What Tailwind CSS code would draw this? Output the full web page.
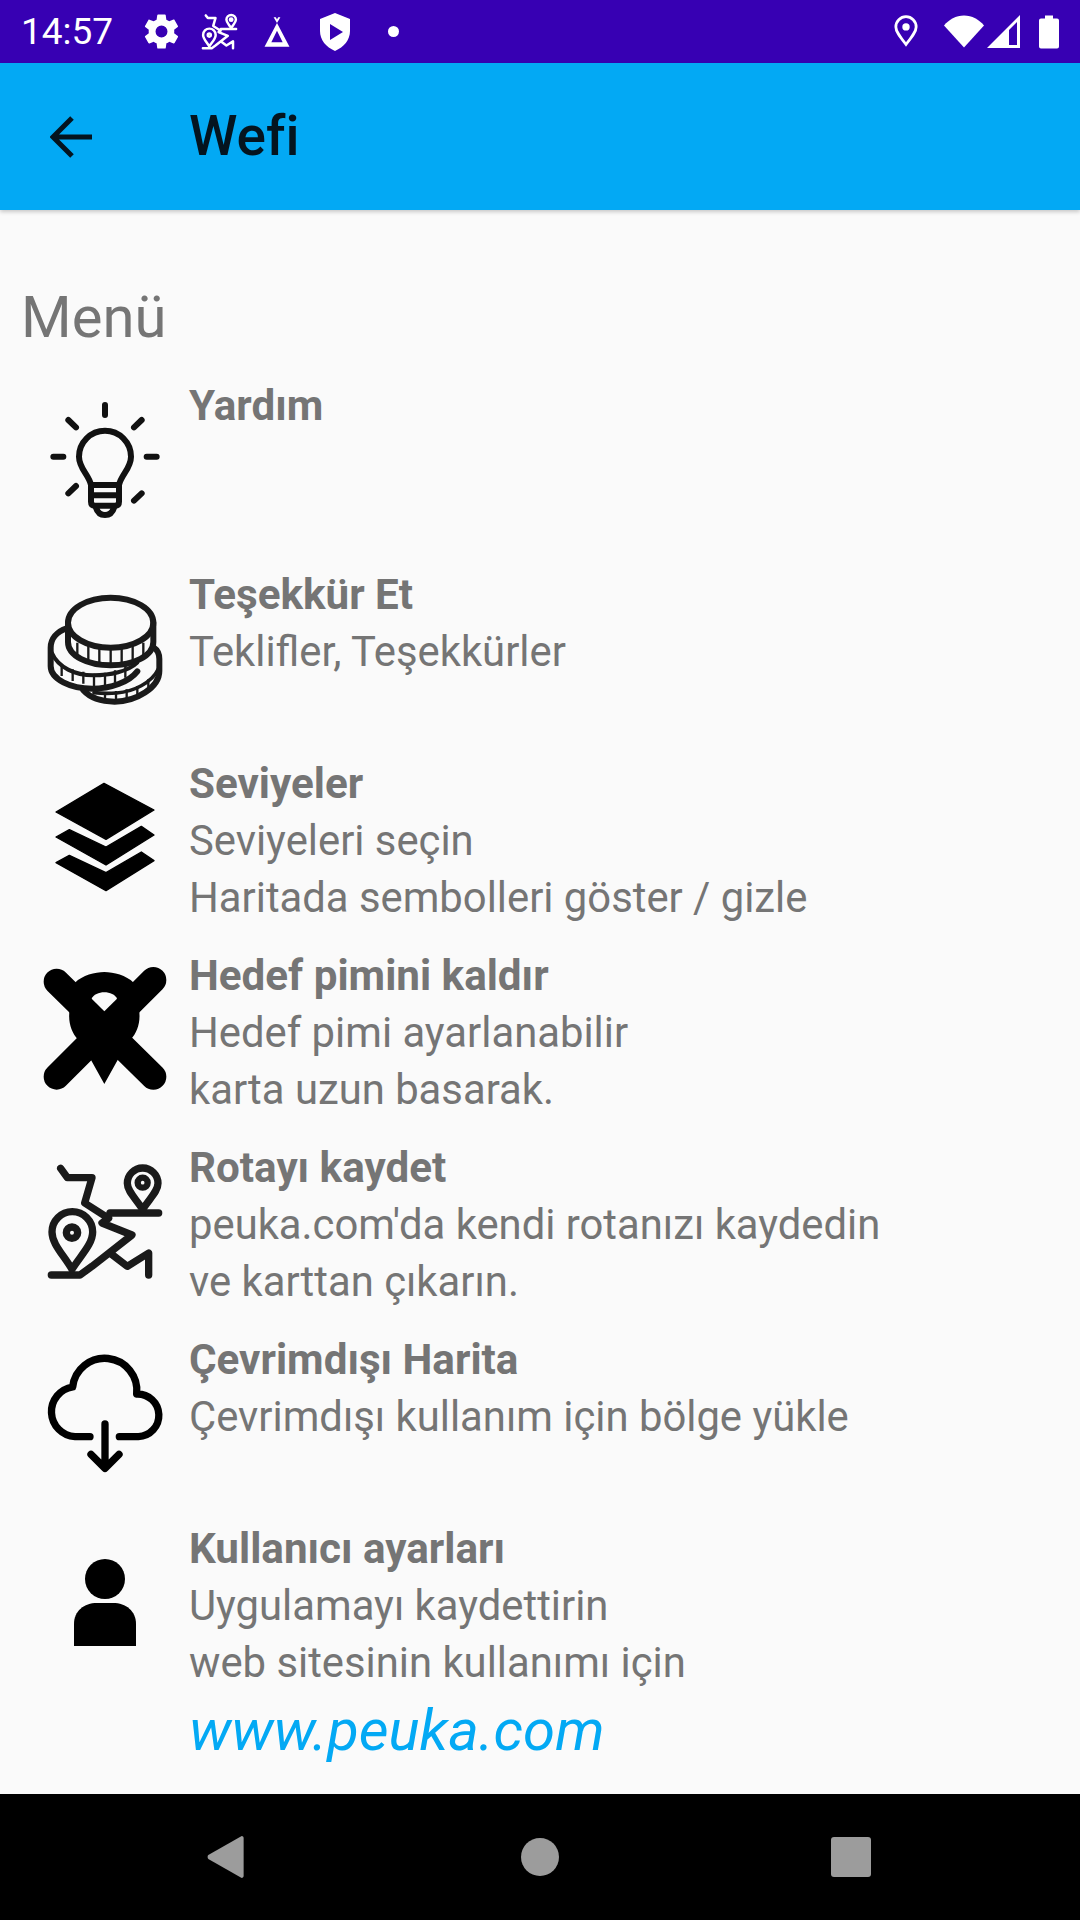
<!DOCTYPE html>
<html lang="en">
<head>
  <meta charset="UTF-8">
  <meta name="viewport" content="width=device-width, initial-scale=1.0">
  <title>Wefi</title>
  <script src="https://cdn.jsdelivr.net/npm/@tailwindcss/browser@4"></script>
</head>
<body class="bg-[#fafafa] font-['Roboto',sans-serif] w-[1080px] h-[1920px] overflow-hidden flex flex-col">
  <!-- Status bar -->
  <div class="h-[63px] bg-[#3700b3] text-white flex items-center shrink-0">
    <span class="ml-[21px] text-[37px] leading-none w-[98px]">14:57</span>
    <svg class="w-[41px] h-[41px] ml-[22px]" viewBox="0 0 24 24" fill="#fff"><path d="M19.4 13c.04-.32.07-.66.07-1s-.03-.68-.07-1l2.1-1.65c.2-.15.25-.42.13-.64l-2-3.46c-.12-.22-.39-.3-.61-.22l-2.49 1c-.52-.4-1.08-.73-1.69-.98l-.38-2.65A.49.49 0 0 0 14 2h-4c-.25 0-.46.18-.49.42l-.38 2.65c-.61.25-1.17.59-1.69.98l-2.49-1c-.23-.09-.49 0-.61.22l-2 3.46c-.13.22-.07.49.12.64L4.57 11c-.04.32-.07.66-.07 1s.03.68.07 1l-2.11 1.65c-.19.15-.24.42-.12.64l2 3.46c.12.22.39.3.61.22l2.49-1c.52.4 1.08.73 1.69.98l.38 2.65c.03.24.24.42.49.42h4c.25 0 .46-.18.49-.42l.38-2.65c.61-.25 1.17-.59 1.69-.98l2.49 1c.23.09.49 0 .61-.22l2-3.46c.12-.22.07-.49-.12-.64L19.4 13zM12 15.5a3.5 3.5 0 1 1 0-7 3.5 3.5 0 0 1 0 7z"/></svg>
    <svg class="w-[39px] h-[39px] ml-[18px]" viewBox="66 51 378 378" fill="none" stroke="#fff" stroke-width="24" stroke-linecap="round" stroke-linejoin="round"><path d="M122 84l20 26h74l-22 76 72 46-20 14 90 36-120 94-36 26H94M268 216h148M270 336l52 40 64-40v66"/><path d="M156 385c-26-44-60-76-60-112a61 61 0 0 1 122 0c0 36-34 68-62 112zM368 205c-22-34-46-54-46-78a46 46 0 0 1 92 0c0 24-24 44-46 78z"/><circle cx="156" cy="275" r="15"/><circle cx="368" cy="125" r="12"/></svg>
    <svg class="w-[34px] h-[34px] ml-[21px]" viewBox="0 0 30 30" fill="#fff"><path d="M15 7l-3-5h2l1 2 1-2h2l-3 5 11 21H4zM15 14l-5 10h10z" fill-rule="evenodd"/></svg>
    <svg class="w-[32px] h-[38px] ml-[25px]" viewBox="0 0 32 38" fill="#fff"><path d="M16 0l15 6v12c0 9-6 16-15 20C7 34 1 27 1 18V6zM11 11v16l13-8z" fill-rule="evenodd"/></svg>
    <span class="w-[11px] h-[11px] rounded-full bg-white ml-[37px]"></span>
    <div class="ml-auto flex items-center">
      <svg class="w-[24px] h-[33px]" viewBox="0 0 26 34" fill="none" stroke="#fff" stroke-width="3"><path d="M13 31C6 22 2 17 2 12a11 11 0 0 1 22 0c0 5-4 10-11 19z"/><circle cx="13" cy="12" r="4" fill="#fff" stroke="none"/></svg>
      <svg class="w-[40px] h-[33px] ml-[26px]" viewBox="0 0 40 32" fill="#fff"><path d="M0 10C5 4 12 0 20 0s15 4 20 10L20 32z"/></svg>
      <svg class="w-[33px] h-[33px] ml-[3px]" viewBox="0 0 33 33" fill="#fff"><path d="M33 0v33H0zM30 7l-8 8v15h8z" fill-rule="evenodd"/></svg>
      <svg class="w-[20px] h-[34px] ml-[19px] mr-[21px]" viewBox="0 0 20 33" fill="#fff"><path d="M6 0h8v3h4a2 2 0 0 1 2 2v26a2 2 0 0 1-2 2H2a2 2 0 0 1-2-2V5a2 2 0 0 1 2-2h4z"/></svg>
    </div>
  </div>

  <!-- App bar -->
  <div class="h-[147px] bg-[#03a9f4] flex items-center shrink-0 shadow-[0_2px_4px_rgba(0,0,0,0.2)] relative text-[#04141f]">
    <svg class="w-[42px] h-[42px] ml-[50px]" viewBox="0 0 42 42" fill="none" stroke="currentColor" stroke-width="5"><path d="M42 21H3M22 2L3 21l19 19"/></svg>
    <span class="ml-[97px] text-[55px] font-medium leading-none [font-variant-ligatures:none]">Wefi</span>
  </div>

  <!-- Menu -->
  <main class="flex-1 text-[#757575] text-[41.8px] leading-[57.5px]">
    <h1 class="text-[58px] leading-none font-normal ml-[21px] mt-[78px] mb-[31px]">Menü</h1>

    <div class="flex h-[189px]">
      <div class="w-[189px] shrink-0 pl-[42px] pt-[19px]">
        <svg class="w-[126px] h-[126px]" viewBox="66 45 378 378" fill="none" stroke="#111" stroke-width="18" stroke-linecap="round" stroke-linejoin="round"><path d="M255 72v30M100 227h30M380 227h30M145 117l23 22M365 117l-23 22M145 337l23-22M365 337l-23 22"/><path d="M213 312c-6-30-36-50-36-85a78 78 0 0 1 156 0c0 35-30 55-36 85zM213 312v50c0 8 4 12 12 12h60c8 0 12-4 12-12v-50zM213 343h84M226 374c4 18 14 28 29 28s25-10 29-28z"/></svg>
      </div>
      <div><p class="font-bold text-[42.2px] -mb-px">Yardım</p></div>
    </div>

    <div class="flex h-[189px]">
      <div class="w-[189px] shrink-0 pl-[42px] pt-[19px]">
        <svg class="w-[126px] h-[126px]" viewBox="66 612 378 378" fill="none" stroke="#1a1a1a" stroke-width="18" stroke-linejoin="round" stroke-linecap="round"><ellipse cx="272" cy="725" rx="128" ry="75"/><path d="M144 725v58c0 42 60 70 128 70s128-28 128-70v-58"/><path d="M140 742c-30 10-48 32-48 58v55c0 40 60 68 125 68 55 0 110-20 135-52"/><path d="M95 815c20 45 70 68 125 68 50 0 105-12 132-38" stroke-width="12"/><path d="M402 800c12 8 16 20 16 34v36c0 50-70 92-134 92-38 0-74-12-94-34"/><path d="M222 935c25 3 45 3 68 1 50-4 105-30 125-72" stroke-width="11"/><path d="M172 785v43M205 795v45M238 800v45M272 802v46M305 800v45M338 795v45M370 785v43M125 850v35M158 865v35M190 872v36M222 878v37M255 875v37M285 868v37M316 855v35M255 935v20M288 930v28M320 925v27M352 915v30M385 895v35" stroke-width="7" stroke-linecap="butt"/></svg>
      </div>
      <div><p class="font-bold text-[42.2px] -mb-px">Teşekkür Et</p><p>Teklifler, Teşekkürler</p></div>
    </div>

    <div class="flex h-[192px]">
      <div class="w-[189px] shrink-0 pl-[42px] pt-[19px]">
        <svg class="w-[126px] h-[126px]" viewBox="66 42 378 378" fill="#000"><path d="M252 70l150 80-144 88-150-82zM148 209l110 52 106-62 38 26-144 90-150-84zM148 286l110 52 106-62 38 26-144 90-150-84z" stroke="#000" stroke-width="4" stroke-linejoin="round"/></svg>
      </div>
      <div><p class="font-bold text-[42.2px] -mb-px">Seviyeler</p><p>Seviyeleri seçin</p><p>Haritada sembolleri göster / gizle</p></div>
    </div>

    <div class="flex h-[192px]">
      <div class="w-[189px] shrink-0 pl-[42px] pt-[19px]">
        <svg class="w-[126px] h-[126px]" viewBox="66 618 378 378" fill="#000"><path d="M165 668c22-22 60-32 88-32s66 10 88 32l16 80c6 40-6 70-24 90l-40 62-40 72-40-72-40-62c-18-20-30-50-24-90z"/><path d="M110 665l290 285M400 660L110 950" stroke="#000" stroke-width="78" stroke-linecap="round"/><path d="M215 716c10-26 66-26 76 0l-38 38z" fill="#fafafa"/></svg>
      </div>
      <div><p class="font-bold text-[42.2px] -mb-px">Hedef pimini kaldır</p><p>Hedef pimi ayarlanabilir</p><p>karta uzun basarak.</p></div>
    </div>

    <div class="flex h-[192px]">
      <div class="w-[189px] shrink-0 pl-[42px] pt-[19px]">
        <svg class="w-[126px] h-[126px]" viewBox="66 51 378 378" fill="none" stroke="#1a1a1a" stroke-width="22" stroke-linecap="round" stroke-linejoin="round"><path d="M122 82l20 28h74l-22 76 72 46-20 14 90 36-120 94-36 26H94M270 216h146M270 336l52 40 64-40v66"/><path d="M156 385c-26-44-60-76-60-112a61 61 0 0 1 122 0c0 36-34 68-62 112zM368 205c-22-34-46-54-46-78a46 46 0 0 1 92 0c0 24-24 44-46 78z"/><circle cx="156" cy="275" r="17"/><circle cx="368" cy="125" r="15" stroke-width="19"/></svg>
      </div>
      <div><p class="font-bold text-[42.2px] -mb-px">Rotayı kaydet</p><p>peuka.com'da kendi rotanızı kaydedin</p><p>ve karttan çıkarın.</p></div>
    </div>

    <div class="flex h-[189px]">
      <div class="w-[189px] shrink-0 pl-[42px] pt-[19px]">
        <svg class="w-[126px] h-[126px]" viewBox="66 630 378 378" fill="none" stroke="#000" stroke-width="22" stroke-linecap="round" stroke-linejoin="round"><path d="M210 890H165A75 75 0 0 1 158 741A96 96 0 0 1 350 762A64 64 0 0 1 355 890H298M255 852v130M213 943l42 42 42-42"/></svg>
      </div>
      <div><p class="font-bold text-[42.2px] -mb-px">Çevrimdışı Harita</p><p>Çevrimdışı kullanım için bölge yükle</p></div>
    </div>

    <div class="flex">
      <div class="w-[189px] shrink-0 pl-[42px] pt-[19px]">
        <svg class="w-[126px] h-[126px]" viewBox="0 0 126 126" fill="#000"><circle cx="63" cy="40" r="20"/><path d="M32 107V85C32 72 42 64 55 64H71C84 64 94 72 94 85V107z"/></svg>
      </div>
      <div>
        <p class="font-bold text-[42.2px] -mb-px">Kullanıcı ayarları</p><p>Uygulamayı kaydettirin</p><p>web sitesinin kullanımı için</p>
        <a class="block mt-[6px] text-[58px] leading-[64px] italic text-[#03a9f4]">www.peuka.com</a>
      </div>
    </div>
  </main>

  <!-- Navigation bar -->
  <div class="h-[126px] bg-black flex items-center shrink-0 relative">
    <svg class="w-[37px] h-[42px] ml-[207px]" viewBox="0 0 38 44" fill="#9c9c9c"><path d="M36 0c1 0 2 1 2 2v40c0 1-1 2-2 2L1 24c-1-1-1-3 0-4z"/></svg>
    <span class="w-[38px] h-[38px] rounded-full bg-[#9c9c9c] ml-[277px]"></span>
    <span class="w-[40px] h-[40px] rounded-[3px] bg-[#9c9c9c] ml-[272px]"></span>
  </div>
</body>
</html>
